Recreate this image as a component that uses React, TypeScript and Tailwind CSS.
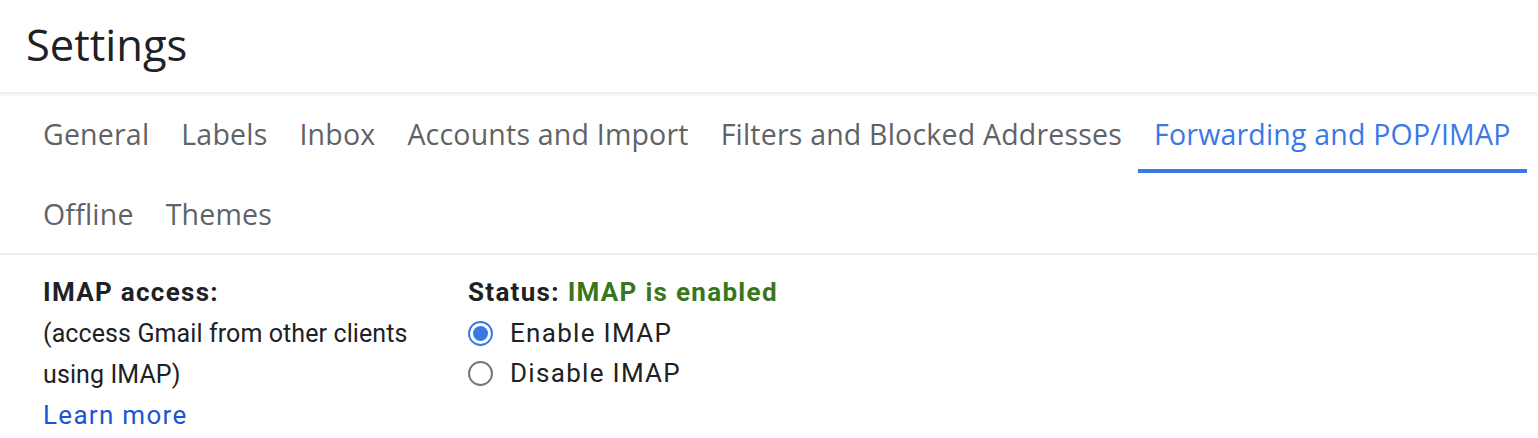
import React, { useState } from "react"

const tabsRow1 = [
  "General",
  "Labels",
  "Inbox",
  "Accounts and Import",
  "Filters and Blocked Addresses",
  "Forwarding and POP/IMAP",
]
const tabsRow2 = ["Offline", "Themes"]

const Tab = ({ label, active }: { label: string; active: boolean }) => (
  <div
    className={
      "h-[80px] px-4 pt-[6px] flex items-center border-b-4 cursor-pointer " +
      (active ? "border-[#3b78e7] text-[#3b78e7]" : "border-transparent text-[#5f6368]")
    }
  >
    {label}
  </div>
)

const Radio = ({ checked, label, onClick }: { checked: boolean; label: string; onClick: () => void }) => (
  <div className="flex items-center h-[40px] cursor-pointer" onClick={onClick}>
    <div
      className={
        "w-[25px] h-[25px] rounded-full border-2 flex items-center justify-center " +
        (checked ? "border-[#3b78e7]" : "border-[#757575]")
      }
    >
      {checked && <div className="w-[15px] h-[15px] rounded-full bg-[#3b78e7]" />}
    </div>
    <span className="ml-[17px]">{label}</span>
  </div>
)

export default function App() {
  const [active] = useState("Forwarding and POP/IMAP")
  const [enabled, setEnabled] = useState(true)

  return (
    <div className="w-[1538px] h-[438px] bg-white overflow-hidden font-['Roboto',sans-serif] text-[#202124]">
      <div className="h-[93px] pl-[26px] flex items-center shadow-[0_2px_3px_rgba(0,0,0,0.08)] border-b border-[#ececec] relative z-10">
        <h1 className="font-['Open_Sans',sans-serif] text-[43.5px] leading-none pb-[3px]">Settings</h1>
      </div>

      <div className="pl-[27px] border-b-2 border-[#eeeeee] font-['Open_Sans',sans-serif] text-[28.5px] tracking-[0.2px]">
        <div className="flex">
          {tabsRow1.map((t) => (
            <Tab key={t} label={t} active={t === active} />
          ))}
        </div>
        <div className="flex">
          {tabsRow2.map((t) => (
            <Tab key={t} label={t} active={t === active} />
          ))}
        </div>
      </div>

      <div className="flex pl-[43px] pt-[17px] text-[26px] tracking-[1.3px]">
        <div className="w-[425px] leading-[41px]">
          <div className="font-bold">IMAP access:</div>
          <div className="text-[25px] tracking-[0.1px]">(access Gmail from other clients</div>
          <div className="text-[25px] tracking-[0.1px]">using IMAP)</div>
          <a className="text-[#1a56cf] cursor-pointer">Learn more</a>
        </div>
        <div className="leading-[41px]">
          <div className="font-bold">
            Status: <span className="text-[#38761d]">IMAP is enabled</span>
          </div>
          <Radio checked={enabled} label="Enable IMAP" onClick={() => setEnabled(true)} />
          <Radio checked={!enabled} label="Disable IMAP" onClick={() => setEnabled(false)} />
        </div>
      </div>
    </div>
  )
}
